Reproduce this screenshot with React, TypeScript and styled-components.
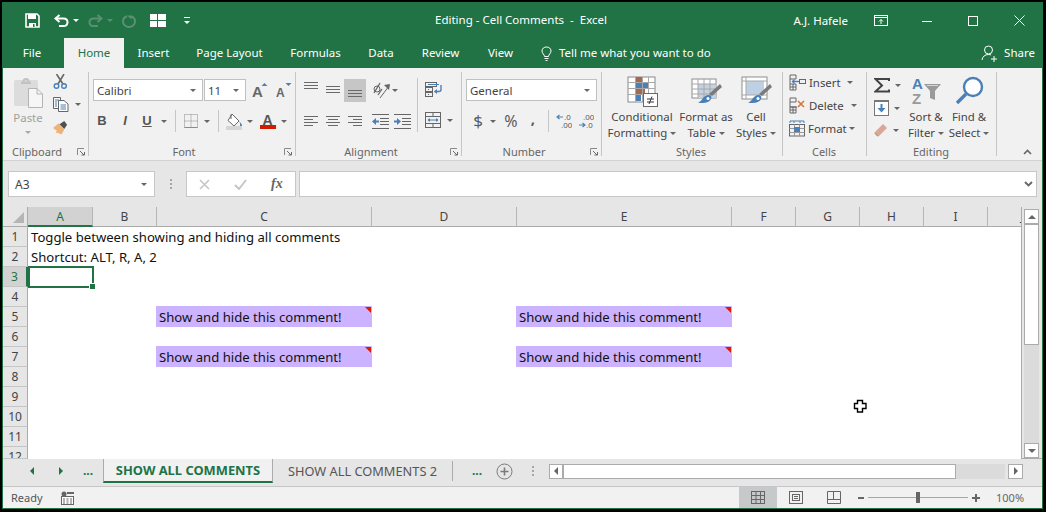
import React from "react";
import styled, { createGlobalStyle } from "styled-components";

const UI_FONT = `"Noto Sans", "Open Sans", sans-serif`;
const CELL_FONT = `"Noto Sans", "Open Sans", sans-serif`;
const GREEN = "#217346";
const ICON_GRAY = "#6a6a6a";
const BLUE = "#4a80b8";

const GlobalStyle = createGlobalStyle`
  html, body { margin: 0; padding: 0; background: #000; }
  * { box-sizing: border-box; }
  body { font-family: ${UI_FONT}; overflow: hidden; }
`;

const Frame = styled.div`
  position: relative;
  width: 1041px;
  height: 507px;
  margin: 2px 0 0 2px;
  border: 1px solid ${GREEN};
  background: #e6e6e6;
  display: flex;
  flex-direction: column;
  overflow: hidden;
`;

/* title bar */
const TitleBar = styled.div`
  height: 35px;
  flex: none;
  background: ${GREEN};
  color: #fff;
  display: flex;
  align-items: center;
  position: relative;
  font-size: 11.5px;
  padding-left: 22px;
`;
const QuickIcon = styled.div<{ $w: number; $ml?: number }>`
  width: ${(p) => p.$w}px;
  margin-left: ${(p) => p.$ml ?? 0}px;
  display: flex;
  align-items: center;
  flex: none;
`;
const TitleText = styled.div`
  position: absolute;
  left: 432px;
  top: 8px;
  line-height: 17px;
  white-space: pre;
`;
const WindowTools = styled.div`
  margin-left: auto;
  display: flex;
  align-items: center;
  padding-right: 17px;
`;
const UserName = styled.div`
  margin-right: 26px;
`;
const WindowBtn = styled.div<{ $ml: number }>`
  margin-left: ${(p) => p.$ml}px;
  display: flex;
`;

/* menu tabs */
const TabRow = styled.div`
  height: 30px;
  flex: none;
  background: ${GREEN};
  color: #fff;
  display: flex;
  font-size: 11.5px;
  line-height: 30px;
`;
const MenuTab = styled.div<{ $w: number; $active?: boolean }>`
  width: ${(p) => p.$w}px;
  flex: none;
  text-align: center;
  background: ${(p) => (p.$active ? "#f1f1f1" : "transparent")};
  color: ${(p) => (p.$active ? GREEN : "#fff")};
`;
const TellMe = styled.div`
  display: flex;
  align-items: center;
  gap: 7px;
  margin-left: 14px;
`;
const ShareBox = styled.div`
  margin-left: auto;
  display: flex;
  align-items: center;
  gap: 6px;
  padding-right: 7px;
`;

/* ribbon */
const Ribbon = styled.div`
  height: 92px;
  flex: none;
  background: #f1f1f1;
  display: flex;
  padding-top: 4px;
  position: relative;
  color: #444;
  font-size: 11.4px;
`;
const RibbonLine = styled.div`
  height: 1px;
  flex: none;
  background: #d2d2d2;
`;
const Group = styled.div<{ $w: number; $pl?: number }>`
  width: ${(p) => p.$w}px;
  height: 84px;
  flex: none;
  border-right: 1px solid #c6c6c6;
  position: relative;
  padding-left: ${(p) => p.$pl ?? 0}px;
`;
const GroupLabel = styled.div<{ $cx: number }>`
  position: absolute;
  top: 73px;
  left: ${(p) => p.$cx - 50}px;
  width: 100px;
  text-align: center;
  font-size: 11px;
  line-height: 14px;
  color: #666;
`;
const Launcher = styled.svg`
  position: absolute;
  right: 3px;
  bottom: 0;
`;
const Row = styled.div<{ $mt?: number; $h?: number }>`
  display: flex;
  align-items: center;
  margin-top: ${(p) => p.$mt ?? 0}px;
  ${(p) => (p.$h ? `height: ${p.$h}px;` : "")}
`;
const Slot = styled.div<{ $ml?: number; $w?: number }>`
  margin-left: ${(p) => p.$ml ?? 0}px;
  ${(p) => (p.$w ? `width: ${p.$w}px;` : "")}
  flex: none;
  display: flex;
  align-items: center;
  justify-content: center;
`;
const Caret = styled.span<{ $ml?: number; $dim?: boolean; $c?: string }>`
  display: inline-block;
  flex: none;
  margin-left: ${(p) => p.$ml ?? 0}px;
  width: 0;
  height: 0;
  border-left: 3px solid transparent;
  border-right: 3px solid transparent;
  border-top: 3px solid ${(p) => p.$c ?? (p.$dim ? "#a8a8a8" : "#666")};
`;
const Combo = styled.div<{ $w: number; $ml?: number }>`
  width: ${(p) => p.$w}px;
  height: 22px;
  margin-left: ${(p) => p.$ml ?? 0}px;
  flex: none;
  background: #fff;
  border: 1px solid #c0c0c0;
  display: flex;
  align-items: center;
  justify-content: space-between;
  padding: 0 6px 0 3px;
  font-size: 11.5px;
  color: #444;
`;
const VSep = styled.div<{ $ml: number; $h: number }>`
  width: 1px;
  height: ${(p) => p.$h}px;
  margin-left: ${(p) => p.$ml}px;
  background: #c6c6c6;
  flex: none;
`;
const FontMark = styled.span<{ $w: number; $ml: number; $i?: boolean; $u?: boolean }>`
  width: ${(p) => p.$w}px;
  margin-left: ${(p) => p.$ml}px;
  text-align: center;
  flex: none;
  font-family: "Liberation Sans", sans-serif;
  font-size: 13px;
  line-height: 18px;
  font-weight: 700;
  color: #555;
  font-style: ${(p) => (p.$i ? "italic" : "normal")};
  text-decoration: ${(p) => (p.$u ? "underline" : "none")};
`;
const NumMark = styled.span<{ $w: number; $ml: number; $s: number; $mb?: number; $b?: boolean }>`
  width: ${(p) => p.$w}px;
  margin-left: ${(p) => p.$ml}px;
  margin-bottom: ${(p) => p.$mb ?? 0}px;
  text-align: center;
  flex: none;
  font-size: ${(p) => p.$s}px;
  font-weight: ${(p) => (p.$b ? 700 : 400)};
  line-height: 20px;
  color: #5c5c5c;
`;
const HighlightBox = styled.div`
  width: 22px;
  height: 23px;
  margin-left: 4px;
  background: #c6c6c6;
  display: flex;
  flex: none;
  justify-content: center;
`;
const AlignBody = styled.div`
  display: flex;
  align-items: flex-start;
`;
const AlignCol = styled.div`
  width: 113px;
  flex: none;
`;
const AlignSep = styled(VSep)`
  margin-top: 6px;
`;
const WrapCol = styled.div`
  margin-left: 7px;
  padding-top: 10px;
  display: flex;
  flex-direction: column;
  gap: 15px;
`;
const ClipCol = styled.div`
  width: 38px;
  margin-left: 6px;
  padding-top: 4px;
  display: flex;
  flex-direction: column;
  align-items: center;
  flex: none;
`;
const DimLabel = styled.div`
  color: #a0a0a0;
  line-height: 16px;
  margin-top: 2px;
`;
const DimCaretWrap = styled.div`
  margin-top: 5px;
  display: flex;
`;
const SmallCol = styled.div<{ $ml: number; $gap: number; $w?: number }>`
  margin-left: ${(p) => p.$ml}px;
  ${(p) => (p.$w ? `width: ${p.$w}px;` : "")}
  padding-top: 2px;
  display: flex;
  flex-direction: column;
  gap: ${(p) => p.$gap}px;
  flex: none;
`;
const Split = styled.div`
  display: flex;
`;
const BigButton = styled.div<{ $w: number }>`
  width: ${(p) => p.$w}px;
  padding-top: 4px;
  flex: none;
  display: flex;
  flex-direction: column;
  align-items: center;
  text-align: center;
  line-height: 16px;
  color: #444;
`;
const BigIcon = styled.div`
  height: 33px;
  display: flex;
  align-items: flex-start;
`;
const BigLine = styled.div`
  white-space: nowrap;
  display: flex;
  align-items: center;
  gap: 3px;
`;
const CellAction = styled.div`
  height: 17px;
  display: flex;
  align-items: center;
  line-height: 17px;
`;
const ActionText = styled.span<{ $w: number }>`
  width: ${(p) => p.$w}px;
  margin-left: 3px;
  flex: none;
`;
const Collapse = styled.svg`
  position: absolute;
  right: 10px;
  bottom: 5px;
`;

/* formula bar */
const FormulaArea = styled.div`
  height: 46px;
  flex: none;
  display: flex;
  align-items: flex-start;
  padding: 10px 0 0 5px;
  background: #e6e6e6;
`;
const NameBox = styled.div`
  width: 147px;
  height: 26px;
  background: #fff;
  border: 1px solid #c6c6c6;
  display: flex;
  align-items: center;
  justify-content: space-between;
  padding: 0 7px 0 6px;
  font-size: 12px;
  color: #444;
`;
const Dots = styled.div`
  width: 2px;
  margin: 8px 14px 0 15px;
  display: flex;
  flex-direction: column;
  gap: 2px;
  flex: none;
  span { height: 2px; background: #a6a6a6; display: block; }
`;
const FxBox = styled.div`
  width: 110px;
  height: 26px;
  background: #fff;
  border: 1px solid #c6c6c6;
  display: flex;
  align-items: center;
  padding-left: 12px;
  gap: 24px;
`;
const FxMark = styled.span`
  font-family: "Liberation Serif", serif;
  font-style: italic;
  font-weight: 700;
  font-size: 14px;
  color: #666;
`;
const FormulaInput = styled.div`
  width: 738px;
  height: 26px;
  margin-left: 3px;
  background: #fff;
  border: 1px solid #c6c6c6;
  display: flex;
  align-items: center;
  justify-content: flex-end;
  padding-right: 3px;
`;

/* sheet */
const SheetArea = styled.div`
  height: 252px;
  flex: none;
  display: flex;
`;
const SheetGrid = styled.div`
  width: 1019px;
  height: 252px;
  flex: none;
  display: grid;
  grid-template-columns: 25px 65px 64px 215px 145px 215px 64px 64px 64px 64px 33px;
  grid-template-rows: 20px repeat(11, 20px) 12px;
  overflow: hidden;
  position: relative;
  border-right: 1px solid #ababab;
  background: #fff;
`;
const Corner = styled.div`
  background: #e6e6e6;
  border-bottom: 1px solid #ababab;
  border-right: 1px solid #ababab;
  display: flex;
  align-items: flex-end;
  justify-content: flex-end;
  padding: 0 3px 3px 0;
`;
const ColHead = styled.div<{ $sel?: boolean; $cut?: boolean }>`
  background: ${(p) => (p.$sel ? "#d2d2d2" : "#e6e6e6")};
  color: ${(p) => (p.$sel ? GREEN : "#444")};
  border-bottom: ${(p) => (p.$sel ? `2px solid ${GREEN}` : "1px solid #ababab")};
  border-right: 1px solid #b5b5b5;
  font-size: 12px;
  line-height: 19px;
  text-align: ${(p) => (p.$cut ? "right" : "center")};
  overflow: hidden;
  ${(p) => (p.$cut ? "border-right: 0; margin-right: -3px;" : "")}
`;
const RowHead = styled.div<{ $sel?: boolean }>`
  background: ${(p) => (p.$sel ? "#d2d2d2" : "#e6e6e6")};
  color: ${(p) => (p.$sel ? GREEN : "#444")};
  border-bottom: 1px solid #c6c6c6;
  border-right: ${(p) => (p.$sel ? `2px solid ${GREEN}` : "1px solid #ababab")};
  font-size: 12px;
  line-height: 20px;
  text-align: center;
  overflow: hidden;
`;
const Cell = styled.div`
  font-family: ${CELL_FONT};
  font-size: 13.13px;
  line-height: 20px;
  color: #111;
  padding-left: 3px;
  white-space: nowrap;
  min-width: 0;
`;
const CommentCell = styled(Cell)`
  background: #ccb3ff;
  margin: -1px 0 0 -1px;
  padding-top: 1px;
  position: relative;
  &::after {
    content: "";
    position: absolute;
    top: 1px;
    right: 1px;
    border-top: 6px solid #e01a00;
    border-left: 6px solid transparent;
  }
`;
const SelectedCell = styled(Cell)`
  border: 2px solid ${GREEN};
  margin: -1px -1px -1px 0;
  position: relative;
  z-index: 1;
  &::after {
    content: "";
    position: absolute;
    right: -3px;
    bottom: -3px;
    width: 5px;
    height: 5px;
    background: ${GREEN};
    border: 1px solid #fff;
    border-width: 1px 0 0 1px;
  }
`;
const VScroll = styled.div`
  width: 15px;
  margin: 0 0 1px 2px;
  flex: none;
  display: flex;
  flex-direction: column;
  padding-top: 2px;
`;
const ScrollBtn = styled.div<{ $h: number }>`
  height: ${(p) => p.$h}px;
  flex: none;
  background: #fff;
  border: 1px solid #ababab;
  display: flex;
  align-items: center;
  justify-content: center;
`;
const ScrollThumb = styled.div`
  height: 121px;
  flex: none;
  background: #fff;
  border: 1px solid #ababab;
`;
const ScrollTrack = styled.div`
  flex: 1;
  background: #dbdbdb;
`;
const ArrowUp = styled.span`
  border-left: 4px solid transparent;
  border-right: 4px solid transparent;
  border-bottom: 4px solid #666;
`;
const ArrowDown = styled.span`
  border-left: 4px solid transparent;
  border-right: 4px solid transparent;
  border-top: 4px solid #666;
`;
const CursorMark = styled.svg`
  position: absolute;
  left: 853px;
  top: 399px;
  z-index: 3;
`;

/* sheet tabs */
const SheetBar = styled.div`
  height: 28px;
  flex: none;
  display: flex;
  align-items: stretch;
  background: #e6e6e6;
  border-top: 1px solid #ababab;
  margin-top: -1px;
  padding-bottom: 3px;
`;
const NavArrow = styled.span<{ $ml: number; $left?: boolean }>`
  margin-left: ${(p) => p.$ml}px;
  align-self: center;
  border-top: 4px solid transparent;
  border-bottom: 4px solid transparent;
  ${(p) => (p.$left ? `border-right: 4px solid ${GREEN};` : `border-left: 4px solid ${GREEN};`)}
  flex: none;
`;
const TabDots = styled.span<{ $ml: number; $w: number }>`
  margin-left: ${(p) => p.$ml}px;
  width: ${(p) => p.$w}px;
  flex: none;
  align-self: center;
  color: ${GREEN};
  font-weight: 700;
  font-size: 12px;
  line-height: 22px;
`;
const ActiveSheet = styled.div`
  width: 170px;
  margin: -1px 0 0 0;
  flex: none;
  background: #f1f1f1;
  border: 1px solid #ababab;
  border-width: 1px 1px 0;
  border-bottom: 2px solid ${GREEN};
  color: ${GREEN};
  font-size: 12.9px;
  font-weight: 700;
  line-height: 23px;
  text-align: center;
`;
const SheetTab = styled.div`
  width: 179px;
  flex: none;
  color: #555;
  font-size: 12.8px;
  line-height: 24px;
  text-align: center;
  position: relative;
`;
const TabDivider = styled.div`
  width: 1px;
  height: 20px;
  align-self: center;
  background: #ababab;
  flex: none;
`;
const PlusCircle = styled.svg`
  align-self: center;
  flex: none;
  margin-left: 12px;
`;
const SheetDots = styled(Dots)`
  margin: 0 15px 0 19px;
  align-self: center;
`;
const HScroll = styled.div`
  display: flex;
  align-items: center;
  align-self: center;
  height: 15px;
  flex: none;
`;
const HBtn = styled.div<{ $ml?: number; $w: number }>`
  width: ${(p) => p.$w}px;
  height: 15px;
  margin-left: ${(p) => p.$ml ?? 0}px;
  background: #fff;
  border: 1px solid #ababab;
  display: flex;
  align-items: center;
  justify-content: center;
  flex: none;
`;
const ArrowLeft = styled.span`
  border-top: 4px solid transparent;
  border-bottom: 4px solid transparent;
  border-right: 4px solid #666;
`;
const ArrowRight = styled.span`
  border-top: 4px solid transparent;
  border-bottom: 4px solid transparent;
  border-left: 4px solid #666;
`;
const HThumb = styled.div`
  width: 393px;
  height: 15px;
  background: #fff;
  border: 1px solid #ababab;
  flex: none;
`;
const HTrack = styled.div`
  width: 49px;
  height: 15px;
  background: #dbdbdb;
  flex: none;
`;

/* status bar */
const StatusBar = styled.div`
  flex: 1;
  background: #f1f1f1;
  border-top: 1px solid #c6c6c6;
  display: flex;
  align-items: center;
  padding-left: 8px;
  font-size: 11px;
  color: #555;
`;
const ReadyText = styled.span`
  width: 50px;
  flex: none;
`;
const ViewBtn = styled.div<{ $w: number; $on?: boolean; $ml?: number }>`
  width: ${(p) => p.$w}px;
  height: 100%;
  margin-left: ${(p) => p.$ml ?? 0}px;
  background: ${(p) => (p.$on ? "#c6c9c9" : "transparent")};
  display: flex;
  align-items: center;
  justify-content: center;
  flex: none;
`;
const ZoomSlider = styled.div`
  position: relative;
  width: 100px;
  height: 1px;
  margin-left: 4px;
  background: #a6a6a6;
  flex: none;
`;
const ZoomThumb = styled.span`
  position: absolute;
  left: 48px;
  top: -5px;
  width: 4px;
  height: 11px;
  background: #666;
`;
const ZoomPct = styled.span`
  margin-left: 16px;
  color: #666;
`;

/* icons */
function Svg({ w, h, children }: { w: number; h: number; children?: React.ReactNode }) {
  return (
    <svg width={w} height={h} viewBox={`0 0 ${w} ${h}`} fill="none">
      {children}
    </svg>
  );
}

function LineIcon({ rows, w = 14, h = 23, c = ICON_GRAY }: { rows: number[][]; w?: number; h?: number; c?: string }) {
  return (
    <Svg w={w} h={h}>
      {rows.map(([x1, x2, y], i) => (
        <rect key={i} x={x1} y={y} width={x2 - x1} height={1} fill={c} />
      ))}
    </Svg>
  );
}

const LauncherIcon = () => (
  <Launcher width="8" height="8" viewBox="0 0 8 8" fill="none">
    <path d="M0.5 7V0.5H7" stroke="#8a8a8a" />
    <path d="M3 3L7 7M4.5 7H7.5V4" stroke="#6a6a6a" />
  </Launcher>
);

const SaveIcon = () => (
  <Svg w={15} h={15}>
    <path d="M1 1H12L14 3V14H1Z" stroke="#fff" strokeWidth="1.6" />
    <rect x="3" y="1" width="8" height="5" fill="#fff" />
    <rect x="4" y="10" width="7" height="4" fill="#fff" />
    <rect x="8" y="11" width="1.5" height="3" fill={GREEN} />
  </Svg>
);
const UndoIcon = ({ c, flip }: { c: string; flip?: boolean }) => (
  <svg width="15" height="14" viewBox="0 0 15 14" fill="none" transform={flip ? "scale(-1 1)" : undefined}>
    <path d="M5.5 1L1.5 4.5L5.5 8" stroke={c} strokeWidth="2" />
    <path d="M2 4.5H9.5C12 4.5 13.5 6 13.5 8.2C13.5 10.5 12 12 9.5 12H5" stroke={c} strokeWidth="2" />
  </svg>
);
const RepeatIcon = () => (
  <Svg w={14} h={14}>
    <path d="M9 2.2C11.5 3 13 5 13 7.5C13 10.5 10.3 13 7 13C3.7 13 1 10.5 1 7.5C1 5 2.5 3 5 2.2" stroke="#5b9073" strokeWidth="2" />
    <path d="M9.5 0V5.5L5 1.5H9.5" fill="#5b9073" />
  </Svg>
);
const LayoutIcon = () => (
  <Svg w={16} h={13}>
    <rect x="0" y="0" width="7" height="6" fill="#fff" />
    <rect x="8" y="0" width="8" height="6" fill="#fff" />
    <rect x="0" y="7" width="7" height="6" fill="#fff" />
    <rect x="8" y="7" width="8" height="6" fill="#fff" />
  </Svg>
);
const CustomizeIcon = () => (
  <Svg w={6} h={8}>
    <rect x="0" y="0" width="6" height="1" fill="#fff" />
    <path d="M0 4H6L3 7Z" fill="#fff" />
  </Svg>
);
const RibbonDisplayIcon = () => (
  <Svg w={14} h={11}>
    <rect x="0.5" y="0.5" width="13" height="10" stroke="#fff" />
    <path d="M0.5 2.5H13.5" stroke="#fff" />
    <path d="M7 9V4.5M5 6.5L7 4.5L9 6.5" stroke="#fff" />
  </Svg>
);
const MinIcon = () => (
  <Svg w={10} h={10}>
    <rect x="0" y="5" width="10" height="1" fill="#fff" />
  </Svg>
);
const MaxIcon = () => (
  <Svg w={10} h={10}>
    <rect x="0.5" y="0.5" width="9" height="9" stroke="#fff" />
  </Svg>
);
const CloseIcon = () => (
  <Svg w={11} h={11}>
    <path d="M0.5 0.5L10.5 10.5M10.5 0.5L0.5 10.5" stroke="#fff" />
  </Svg>
);
const BulbIcon = () => (
  <Svg w={11} h={15}>
    <path d="M3.5 10.5C3.5 8.5 1 7.5 1 5C1 2.5 3 1 5.5 1C8 1 10 2.5 10 5C10 7.5 7.5 8.5 7.5 10.5Z" stroke="#fff" />
    <path d="M3.5 12.5H7.5M4.5 14.5H6.5" stroke="#fff" />
  </Svg>
);
const ShareIcon = () => (
  <Svg w={17} h={17}>
    <circle cx="7.5" cy="5" r="4" stroke="#fff" />
    <path d="M1 15C1.5 11.5 4 9.5 7.5 9.5C8.5 9.5 9.5 9.7 10 10" stroke="#fff" />
    <path d="M13 11V17M10 14H16" stroke="#fff" />
  </Svg>
);

const PasteIcon = () => (
  <Svg w={30} h={31}>
    <rect x="1" y="3" width="24" height="26" rx="1.5" fill="#dcdcdc" />
    <path d="M8 4.5H18V7H8Z" fill="#c2c2c2" />
    <path d="M10.5 4.5C10.5 1 15.5 1 15.5 4.5" stroke="#c2c2c2" strokeWidth="2" />
    <path d="M15.5 11.5H24L29.5 17V30.5H15.5Z" fill="#f6f6f6" stroke="#b4b4b4" />
    <path d="M24 11.5V17H29.5" stroke="#b4b4b4" />
  </Svg>
);
const ScissorsIcon = () => (
  <Svg w={15} h={15}>
    <path d="M3.5 0L10 10M11 0L5 10" stroke="#666" strokeWidth="1.6" />
    <circle cx="3.5" cy="12" r="2.3" stroke={BLUE} strokeWidth="1.4" />
    <circle cx="11" cy="12" r="2.3" stroke={BLUE} strokeWidth="1.4" />
  </Svg>
);
const CopyIcon = () => (
  <Svg w={16} h={15}>
    <path d="M0.5 0.5H7.5V11.5H0.5Z" stroke="#666" fill="#f8f8f8" />
    <path d="M5.5 3.5H11L15 7V14.5H5.5Z" stroke="#666" fill="#fff" />
    <path d="M2 3H6M2 5H4M2 7H4M2 9H4M7.5 8H13M7.5 10H13M7.5 12H13" stroke={BLUE} />
  </Svg>
);
const BrushIcon = () => (
  <Svg w={16} h={15}>
    <path d="M0 8L6 3L12 10L9 15L5 13L3 13.5L4 11Z" fill="#eeb37a" />
    <path d="M7 4L12 9L15 4.5L12 0.5Z" fill="#4f4f4f" />
  </Svg>
);
const GrowIcon = ({ s, up }: { s: number; up?: boolean }) => (
  <Svg w={16} h={17}>
    <text x="0" y="15" fontFamily="'Liberation Sans', sans-serif" fontSize={s} fontWeight="700" fill="#666">
      A
    </text>
    <path d={up ? "M9.5 4L12.5 1L15.5 4Z" : "M9.5 1H15.5L12.5 4Z"} fill={BLUE} />
  </Svg>
);
const BordersIcon = () => (
  <svg width="14" height="14" viewBox="0 0 14 14" fill="none">
    <rect x="0.5" y="0.5" width="13" height="13" stroke="#8a8a8a" strokeDasharray="1 1" />
    <path d="M7 0.5V13.5M0.5 7H13.5" stroke="#8a8a8a" strokeDasharray="1 1" />
    <path d="M0.5 13.5H13.5" stroke="#8a8a8a" />
  </svg>
);
const FillIcon = () => (
  <Svg w={17} h={17}>
    <path d="M6 1L13 8L8 13L2 7.5Z" stroke="#666" fill="#fff" />
    <path d="M5 1.5V6" stroke="#666" />
    <path d="M13 8C15 10 16 11.5 16 12.5C16 14 14 14 14 12.5C14 11.5 14.5 10 13 8Z" fill={BLUE} />
    <rect x="0" y="13" width="16" height="4" fill="#d5d5d5" />
  </Svg>
);
const FontColorIcon = () => (
  <Svg w={16} h={16}>
    <text x="2.5" y="12" fontFamily="'Liberation Sans', sans-serif" fontSize="14" fontWeight="700" fill="#555">
      A
    </text>
    <rect x="0" y="12" width="16" height="4" fill="#cf1c00" />
  </Svg>
);
const OrientationIcon = () => (
  <Svg w={19} h={19}>
    <path d="M2 12L8 2M6 14L10 8" stroke="#666" strokeWidth="1.3" />
    <circle cx="5" cy="8" r="3" stroke="#666" />
    <path d="M8 17L17 5" stroke="#666" />
    <path d="M12 4L18 3L17 9Z" fill="#666" />
  </Svg>
);
const WrapIcon = () => (
  <Svg w={17} h={15}>
    <rect x="0.5" y="0.5" width="11" height="4" stroke="#666" />
    <rect x="0.5" y="5.5" width="7" height="4" stroke="#666" />
    <rect x="0.5" y="10.5" width="7" height="4" stroke="#666" />
    <path d="M3 2.5H14" stroke={BLUE} />
    <path d="M3 7.5H4M3 12.5H4" stroke="#666" />
    <path d="M16 3V7.5C16 8.5 15 9.5 14 9.5H9.5" stroke={BLUE} strokeWidth="1.4" />
    <path d="M12 7L9 9.5L12 12Z" fill={BLUE} />
  </Svg>
);
const MergeIcon = () => (
  <Svg w={16} h={16}>
    <rect x="0.5" y="0.5" width="15" height="15" stroke="#666" />
    <path d="M0.5 4.5H15.5M0.5 11.5H15.5M8 0.5V4.5M8 11.5V15.5" stroke="#666" />
    <path d="M3 8H13" stroke={BLUE} />
    <path d="M5 6L2.5 8L5 10ZM11 6L13.5 8L11 10Z" fill={BLUE} />
  </Svg>
);
const IndentIcon = ({ out }: { out?: boolean }) => (
  <Svg w={17} h={15}>
    <path d="M0 0.5H17M0 14.5H17M8 4.5H17M8 7.5H17M8 10.5H17" stroke="#666" />
    {out ? (
      <path d="M0 7.5L4 4V6.5H7V8.5H4V11Z" fill={BLUE} />
    ) : (
      <path d="M7 7.5L3 4V6.5H0V8.5H3V11Z" fill={BLUE} />
    )}
  </Svg>
);
const DecimalIcon = ({ more }: { more?: boolean }) => (
  <Svg w={16} h={16}>
    <text x={more ? 8 : 5} y="7" fontFamily="'Liberation Sans', sans-serif" fontSize="8" fill="#555">
      {more ? ".0" : ".00"}
    </text>
    <text x={more ? 5 : 8} y="15" fontFamily="'Liberation Sans', sans-serif" fontSize="8" fill="#555">
      {more ? ".00" : ".0"}
    </text>
    {more ? (
      <path d="M7 4H2M3.5 2L1 4L3.5 6" stroke={BLUE} strokeWidth="1.2" />
    ) : (
      <path d="M1 12H6M4.5 10L7 12L4.5 14" stroke={BLUE} strokeWidth="1.2" />
    )}
  </Svg>
);
const CondFormatIcon = () => (
  <Svg w={31} h={31}>
    <rect x="1" y="1" width="27" height="25" fill="#fff" stroke="#8a8a8a" />
    <rect x="9" y="1" width="6" height="5" fill="#a5694f" />
    <rect x="9" y="7" width="12" height="5" fill={BLUE} />
    <rect x="9" y="13" width="9" height="5" fill="#a5694f" />
    <rect x="9" y="19" width="5" height="6" fill={BLUE} />
    <path d="M8.5 1V26M15.5 1V26M21.5 1V26M1 6.5H28M1 12.5H28M1 18.5H28" stroke="#a8a8a8" />
    <rect x="16.5" y="17.5" width="14" height="13" fill="#fff" stroke="#6a6a6a" />
    <path d="M20 23H27M20 26H27M25 20.5L22 28" stroke="#333" />
  </Svg>
);
const PaintBrush = () => (
  <>
    <path d="M29 8L31 11L21 20L18 18Z" fill="#7a7a7a" />
    <path d="M17 19C20 19 21 21 20 23C18.5 26.5 13 28 7 26.5C10.5 25.5 11 23 12.5 21.5C14 20 15.5 19 17 19Z" fill={BLUE} />
    <circle cx="17" cy="22.5" r="1.5" fill="#fff" />
  </>
);
const FormatTableIcon = () => (
  <Svg w={31} h={31}>
    <rect x="1" y="3" width="24" height="19" fill="#fff" stroke="#8e8e8e" />
    <rect x="7" y="8" width="18" height="14" fill="#c3d1e0" />
    <path d="M7 3V22M13 3V22M19 3V22M1 8H25M1 13H25M1 18H25" stroke="#a8a8a8" />
    <PaintBrush />
  </Svg>
);
const CellStylesIcon = () => (
  <Svg w={31} h={31}>
    <rect x="1" y="1" width="25" height="22" fill="#fff" stroke="#8e8e8e" />
    <rect x="5" y="5" width="18" height="14" fill="#bdd0e4" />
    <path d="M5 1V23M1 5H26M1 19H26" stroke="#a8a8a8" />
    <PaintBrush />
  </Svg>
);
const InsertIcon = () => (
  <Svg w={17} h={17}>
    <path d="M1 1H7V5H1ZM1 10H7V16H1ZM1 13H7M4 10V16M1 5V10" stroke="#666" />
    <rect x="10.5" y="5.5" width="6" height="4" stroke="#666" />
    <path d="M10 7.5H3" stroke={BLUE} strokeWidth="1.4" />
    <path d="M5.5 5L2.5 7.5L5.5 10Z" fill={BLUE} />
  </Svg>
);
const DeleteIcon = () => (
  <Svg w={17} h={17}>
    <path d="M1 1H7V5H1ZM1 10H7V16H1ZM1 13H7M4 10V16M1 5V10H8" stroke="#666" />
    <path d="M9 4L15 10M15 4L9 10" stroke="#d8763a" strokeWidth="1.6" />
  </Svg>
);
const FormatIcon = () => (
  <Svg w={16} h={17}>
    <path d="M1 1H15M1 1V3M15 1V3M5 1V3M11 1V3" stroke={BLUE} />
    <rect x="0.5" y="4.5" width="15" height="11.5" stroke="#666" />
    <path d="M0.5 8.5H15.5M0.5 12.5H15.5M5.5 4.5V16M10.5 4.5V16" stroke="#999" />
    <rect x="5" y="7" width="6" height="5" fill={BLUE} />
  </Svg>
);
const SigmaIcon = () => (
  <Svg w={16} h={15}>
    <path d="M15 3V1H1.5L8 7.5L1.5 13.5H15V11.5" stroke="#444" strokeWidth="2" />
  </Svg>
);
const FillDownIcon = () => (
  <Svg w={15} h={16}>
    <rect x="0.5" y="0.5" width="14" height="15" stroke="#777" fill="#fff" />
    <rect x="0" y="0" width="15" height="2" fill="#777" />
    <path d="M7.5 4V11" stroke={BLUE} strokeWidth="2" />
    <path d="M3.5 8L7.5 12.5L11.5 8Z" fill={BLUE} />
  </Svg>
);
const EraserIcon = () => (
  <Svg w={14} h={14}>
    <path d="M9 1L13 5L5 13L1 9Z" fill="#d9a795" />
    <path d="M1 9L5 13L3.5 13.5L0.5 10.5Z" fill="#b98b7b" />
  </Svg>
);
const SortIcon = () => (
  <Svg w={31} h={31}>
    <text x="1" y="13" fontFamily="'Liberation Sans', sans-serif" fontWeight="700" fontSize="15" fill={BLUE}>
      A
    </text>
    <text x="1" y="28" fontFamily="'Liberation Sans', sans-serif" fontWeight="700" fontSize="15" fill="#9a9a9a">
      Z
    </text>
    <path d="M13 8H30L24 15V24L19 22V15Z" fill="#9a9a9a" />
    <path d="M16 9.5H27" stroke="#d5d5d5" />
  </Svg>
);
const FindIcon = () => (
  <Svg w={29} h={29}>
    <circle cx="18" cy="11" r="9" stroke={BLUE} strokeWidth="2.4" fill="#fff" />
    <path d="M11 18L2 27" stroke={BLUE} strokeWidth="3.4" />
  </Svg>
);
const XMark = () => (
  <Svg w={11} h={11}>
    <path d="M1 1L10 10M10 1L1 10" stroke="#c6c6c6" strokeWidth="1.6" />
  </Svg>
);
const CheckMark = () => (
  <Svg w={13} h={11}>
    <path d="M1 6L5 10L12 1" stroke="#c6c6c6" strokeWidth="2" />
  </Svg>
);
const ChevronDown = () => (
  <Svg w={9} h={6}>
    <path d="M1 1L4.5 4.5L8 1" stroke="#666" strokeWidth="1.8" />
  </Svg>
);
const MacroIcon = () => (
  <Svg w={13} h={14}>
    <circle cx="3" cy="3" r="2.5" fill="#666" />
    <rect x="6" y="1" width="7" height="2" fill="#666" />
    <rect x="0.5" y="5.5" width="12" height="8" stroke="#666" fill="#fff" />
    <path d="M2 8H4M5.5 8H7.5M9 8H11M2 10H4M5.5 10H7.5M9 10H11M2 12H4M5.5 12H7.5M9 12H11" stroke="#666" />
  </Svg>
);

const COLS = ["A", "B", "C", "D", "E", "F", "G", "H", "I", "J"];
const ROWS = [1, 2, 3, 4, 5, 6, 7, 8, 9, 10, 11, 12];
const COMMENT = "Show and hide this comment!";

function cellFor(row: number, col: string) {
  const key = col + row;
  if (key === "A1") return <Cell key={key}>Toggle between showing and hiding all comments</Cell>;
  if (key === "A2") return <Cell key={key}>Shortcut: ALT, R, A, 2</Cell>;
  if (key === "A3") return <SelectedCell key={key} />;
  if ((row === 5 || row === 7) && (col === "C" || col === "E"))
    return <CommentCell key={key}>{COMMENT}</CommentCell>;
  return <Cell key={key} />;
}

export default function App() {
  return (
    <>
      <GlobalStyle />
      <Frame>
        <TitleBar>
          <QuickIcon $w={15}><SaveIcon /></QuickIcon>
          <QuickIcon $w={15} $ml={14}><UndoIcon c="#fff" /></QuickIcon>
          <QuickIcon $w={6} $ml={4}><Caret $c="#fff" /></QuickIcon>
          <QuickIcon $w={15} $ml={9}><UndoIcon c="#5b9073" flip /></QuickIcon>
          <QuickIcon $w={6} $ml={4}><Caret $c="#5b9073" /></QuickIcon>
          <QuickIcon $w={14} $ml={9}><RepeatIcon /></QuickIcon>
          <QuickIcon $w={16} $ml={14}><LayoutIcon /></QuickIcon>
          <QuickIcon $w={6} $ml={18}><CustomizeIcon /></QuickIcon>
          <TitleText>{"Editing - Cell Comments  -  Excel"}</TitleText>
          <WindowTools>
            <UserName>A.J. Hafele</UserName>
            <WindowBtn $ml={0}><RibbonDisplayIcon /></WindowBtn>
            <WindowBtn $ml={34}><MinIcon /></WindowBtn>
            <WindowBtn $ml={36}><MaxIcon /></WindowBtn>
            <WindowBtn $ml={36}><CloseIcon /></WindowBtn>
          </WindowTools>
        </TitleBar>

        <TabRow>
          <MenuTab $w={58}>File</MenuTab>
          <MenuTab $w={3} />
          <MenuTab $w={60} $active>Home</MenuTab>
          <MenuTab $w={59}>Insert</MenuTab>
          <MenuTab $w={93}>Page Layout</MenuTab>
          <MenuTab $w={79}>Formulas</MenuTab>
          <MenuTab $w={52}>Data</MenuTab>
          <MenuTab $w={67}>Review</MenuTab>
          <MenuTab $w={53}>View</MenuTab>
          <TellMe><BulbIcon />Tell me what you want to do</TellMe>
          <ShareBox><ShareIcon />Share</ShareBox>
        </TabRow>

        <Ribbon>
          <Group $w={86}>
            <Row>
              <ClipCol>
                <PasteIcon />
                <DimLabel>Paste</DimLabel>
                <DimCaretWrap><Caret $dim /></DimCaretWrap>
              </ClipCol>
              <SmallCol $ml={6} $gap={8}>
                <Slot $w={15}><ScissorsIcon /></Slot>
                <Split><CopyIcon /><Slot $ml={6}><Caret /></Slot></Split>
                <Slot $w={15}><BrushIcon /></Slot>
              </SmallCol>
            </Row>
            <GroupLabel $cx={34}>Clipboard</GroupLabel>
            <LauncherIcon />
          </Group>

          <Group $w={207} $pl={4}>
            <Row $mt={7}>
              <Combo $w={110}>Calibri<Caret /></Combo>
              <Combo $w={42} $ml={1}>11<Caret /></Combo>
              <Slot $ml={6}><GrowIcon s={15} up /></Slot>
              <Slot $ml={8}><GrowIcon s={12} /></Slot>
            </Row>
            <Row $mt={10} $h={20}>
              <FontMark $w={12} $ml={3}>B</FontMark>
              <FontMark $w={12} $ml={11} $i>I</FontMark>
              <FontMark $w={12} $ml={10} $u>U</FontMark>
              <Caret $ml={8} />
              <VSep $ml={8} $h={22} />
              <Slot $ml={8}><BordersIcon /></Slot>
              <Caret $ml={6} />
              <VSep $ml={8} $h={22} />
              <Slot $ml={7}><FillIcon /></Slot>
              <Caret $ml={4} />
              <Slot $ml={7}><FontColorIcon /></Slot>
              <Caret $ml={5} />
            </Row>
            <GroupLabel $cx={95}>Font</GroupLabel>
            <LauncherIcon />
          </Group>

          <Group $w={166} $pl={8}>
            <AlignBody>
              <AlignCol>
                <Row $mt={7} $h={23}>
                  <LineIcon rows={[[0, 14, 3], [0, 14, 6], [0, 14, 9]]} />
                  <Slot $ml={8}><LineIcon rows={[[0, 14, 7], [0, 14, 10], [0, 14, 13]]} /></Slot>
                  <HighlightBox><LineIcon rows={[[0, 14, 11], [0, 14, 14], [0, 14, 17]]} /></HighlightBox>
                  <Slot $ml={6}><OrientationIcon /></Slot>
                  <Caret $ml={1} />
                </Row>
                <Row $mt={8} $h={22}>
                  <LineIcon h={16} rows={[[0, 14, 3], [0, 9, 6], [0, 14, 9], [0, 9, 12]]} />
                  <Slot $ml={8}><LineIcon h={16} rows={[[0, 14, 3], [2, 12, 6], [0, 14, 9], [2, 12, 12]]} /></Slot>
                  <Slot $ml={8}><LineIcon h={16} rows={[[0, 14, 3], [5, 14, 6], [0, 14, 9], [5, 14, 12]]} /></Slot>
                  <Slot $ml={10}><IndentIcon out /></Slot>
                  <Slot $ml={5}><IndentIcon /></Slot>
                </Row>
              </AlignCol>
              <AlignSep $ml={0} $h={54} />
              <WrapCol>
                <WrapIcon />
                <Split><MergeIcon /><Slot $ml={6}><Caret /></Slot></Split>
              </WrapCol>
            </AlignBody>
            <GroupLabel $cx={75}>Alignment</GroupLabel>
            <LauncherIcon />
          </Group>

          <Group $w={140} $pl={4}>
            <Row $mt={7}>
              <Combo $w={131}>General<Caret /></Combo>
            </Row>
            <Row $mt={10} $h={20}>
              <NumMark $w={12} $ml={6} $s={17}>$</NumMark>
              <Caret $ml={6} />
              <NumMark $w={16} $ml={7} $s={16}>%</NumMark>
              <NumMark $w={8} $ml={10} $s={15} $mb={7} $b>,</NumMark>
              <VSep $ml={11} $h={22} />
              <Slot $ml={7}><DecimalIcon more /></Slot>
              <Slot $ml={6}><DecimalIcon /></Slot>
            </Row>
            <GroupLabel $cx={62}>Number</GroupLabel>
            <LauncherIcon />
          </Group>

          <Group $w={181} $pl={2}>
            <Row>
              <BigButton $w={76}>
                <BigIcon><CondFormatIcon /></BigIcon>
                <BigLine>Conditional</BigLine>
                <BigLine>Formatting<Caret /></BigLine>
              </BigButton>
              <BigButton $w={52}>
                <BigIcon><FormatTableIcon /></BigIcon>
                <BigLine>Format as</BigLine>
                <BigLine>Table<Caret /></BigLine>
              </BigButton>
              <BigButton $w={48}>
                <BigIcon><CellStylesIcon /></BigIcon>
                <BigLine>Cell</BigLine>
                <BigLine>Styles<Caret /></BigLine>
              </BigButton>
            </Row>
            <GroupLabel $cx={89}>Styles</GroupLabel>
          </Group>

          <Group $w={84} $pl={6}>
            <SmallCol $ml={0} $gap={6}>
              <CellAction><InsertIcon /><ActionText $w={38}>Insert</ActionText><Caret /></CellAction>
              <CellAction><DeleteIcon /><ActionText $w={42}>Delete</ActionText><Caret /></CellAction>
              <CellAction><FormatIcon /><ActionText $w={40}>Format</ActionText><Caret $ml={1} /></CellAction>
            </SmallCol>
            <GroupLabel $cx={41}>Cells</GroupLabel>
          </Group>

          <Group $w={130} $pl={7}>
            <Row>
              <SmallCol $ml={0} $gap={7} $w={30}>
                <Split><SigmaIcon /><Slot $ml={5}><Caret /></Slot></Split>
                <Split><FillDownIcon /><Slot $ml={5}><Caret /></Slot></Split>
                <Split><EraserIcon /><Slot $ml={5}><Caret /></Slot></Split>
              </SmallCol>
              <BigButton $w={44}>
                <BigIcon><SortIcon /></BigIcon>
                <BigLine>Sort &amp;</BigLine>
                <BigLine>Filter<Caret /></BigLine>
              </BigButton>
              <BigButton $w={42}>
                <BigIcon><FindIcon /></BigIcon>
                <BigLine>Find &amp;</BigLine>
                <BigLine>Select<Caret /></BigLine>
              </BigButton>
            </Row>
            <GroupLabel $cx={64}>Editing</GroupLabel>
          </Group>

          <Collapse width="9" height="6" viewBox="0 0 9 6" fill="none">
            <path d="M1 5L4.5 1.5L8 5" stroke="#666" strokeWidth="1.6" />
          </Collapse>
        </Ribbon>
        <RibbonLine />

        <FormulaArea>
          <NameBox>A3<Caret $ml={0} /></NameBox>
          <Dots><span /><span /><span /></Dots>
          <FxBox><XMark /><CheckMark /><FxMark>fx</FxMark></FxBox>
          <FormulaInput><ChevronDown /></FormulaInput>
        </FormulaArea>

        <SheetArea>
          <SheetGrid>
            <Corner>
              <svg width="11" height="11" viewBox="0 0 11 11"><path d="M11 0V11H0Z" fill="#b5b5b5" /></svg>
            </Corner>
            {COLS.map((c) => (
              <ColHead key={c} $sel={c === "A"} $cut={c === "J"}>{c}</ColHead>
            ))}
            {ROWS.map((r) => (
              <React.Fragment key={r}>
                <RowHead $sel={r === 3}>{r}</RowHead>
                {COLS.map((c) => cellFor(r, c))}
              </React.Fragment>
            ))}
          </SheetGrid>
          <VScroll>
            <ScrollBtn $h={15}><ArrowUp /></ScrollBtn>
            <ScrollThumb />
            <ScrollTrack />
            <ScrollBtn $h={15}><ArrowDown /></ScrollBtn>
          </VScroll>
        </SheetArea>

        <SheetBar>
          <NavArrow $ml={27} $left />
          <NavArrow $ml={25} />
          <TabDots $ml={20} $w={20}>...</TabDots>
          <ActiveSheet>SHOW ALL COMMENTS</ActiveSheet>
          <SheetTab>SHOW ALL COMMENTS 2</SheetTab>
          <TabDivider />
          <TabDots $ml={19} $w={12}>...</TabDots>
          <PlusCircle width="17" height="17" viewBox="0 0 17 17" fill="none">
            <circle cx="8.5" cy="8.5" r="7.5" stroke="#7a7a7a" />
            <path d="M8.5 4.5V12.5M4.5 8.5H12.5" stroke="#7a7a7a" strokeWidth="1.6" />
          </PlusCircle>
          <SheetDots><span /><span /><span /></SheetDots>
          <HScroll>
            <HBtn $w={14}><ArrowLeft /></HBtn>
            <HThumb />
            <HTrack />
            <HBtn $w={15} $ml={3}><ArrowRight /></HBtn>
          </HScroll>
        </SheetBar>

        <StatusBar>
          <ReadyText>Ready</ReadyText>
          <MacroIcon />
          <ViewBtn $w={38} $on $ml={665}>
            <Svg w={14} h={13}>
              <rect x="0.5" y="0.5" width="13" height="12" stroke="#666" />
              <path d="M5 0.5V12.5M9.5 0.5V12.5M0.5 4.5H13.5M0.5 8.5H13.5" stroke="#666" />
            </Svg>
          </ViewBtn>
          <ViewBtn $w={38}>
            <Svg w={14} h={13}>
              <rect x="0.5" y="0.5" width="13" height="12" stroke="#666" />
              <rect x="3.5" y="3.5" width="7" height="6" stroke="#666" />
              <path d="M5 5.5H9M5 7.5H9" stroke="#666" />
            </Svg>
          </ViewBtn>
          <ViewBtn $w={38}>
            <Svg w={14} h={13}>
              <path d="M0.5 0.5H13.5V12.5H0.5ZM0.5 8.5H13.5M6.5 0.5V8.5" stroke="#666" />
            </Svg>
          </ViewBtn>
          <Slot $ml={5}>
            <Svg w={6} h={2}><rect width="6" height="2" fill="#666" /></Svg>
          </Slot>
          <ZoomSlider><ZoomThumb /></ZoomSlider>
          <Slot $ml={4}>
            <Svg w={8} h={8}><path d="M0 3H8V5H0ZM3 0H5V8H3Z" fill="#666" /></Svg>
          </Slot>
          <ZoomPct>100%</ZoomPct>
        </StatusBar>
      </Frame>
      <CursorMark width="15" height="15" viewBox="0 0 15 15" fill="none">
        <path d="M4.5 1.5H9.5V4.5H13V9.5H9.5V13H4.5V9.5H1.5V4.5H4.5Z" fill="#fff" stroke="#000" strokeWidth="1.4" />
      </CursorMark>
    </>
  );
}
